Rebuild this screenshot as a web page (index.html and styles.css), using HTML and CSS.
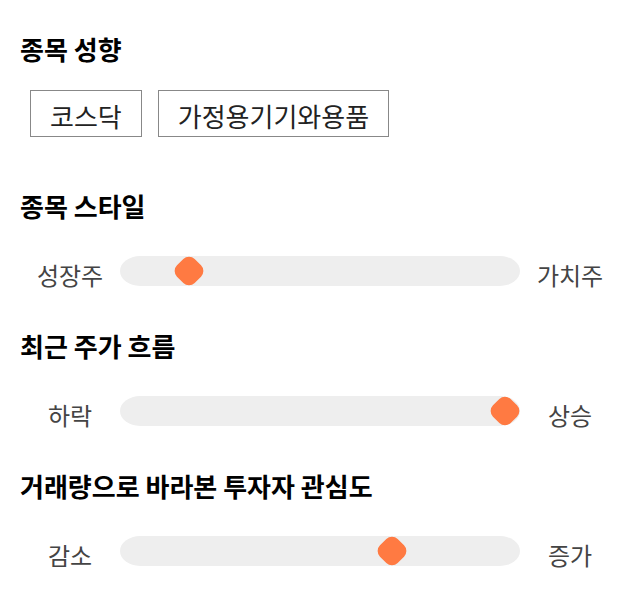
FILE: index.html
```html
<!DOCTYPE html>
<html>
  <head>
    <meta charset="utf-8" />
    <title>종목 분석</title>
    <link rel="stylesheet" href="styles.css">
  </head>
  <body>
    <section class="group">
      <h2 class="title">종목 성향</h2>
      <ul class="tags">
        <li class="tag">코스닥</li>
        <li class="tag">가정용기기와용품</li>
      </ul>
    </section>

    <section class="group">
      <h2 class="title">종목 스타일</h2>
      <div class="scale">
        <span class="scale-label">성장주</span>
        <div class="track"><span class="thumb" style="left: 17.25%"></span></div>
        <span class="scale-label">가치주</span>
      </div>
    </section>

    <section class="group">
      <h2 class="title">최근 주가 흐름</h2>
      <div class="scale">
        <span class="scale-label">하락</span>
        <div class="track"><span class="thumb" style="left: 96.25%"></span></div>
        <span class="scale-label">상승</span>
      </div>
    </section>

    <section class="group">
      <h2 class="title">거래량으로 바라본 투자자 관심도</h2>
      <div class="scale">
        <span class="scale-label">감소</span>
        <div class="track"><span class="thumb" style="left: 68%"></span></div>
        <span class="scale-label">증가</span>
      </div>
    </section>
  </body>
</html>
```

FILE: styles.css
```css
html { font-family: "Noto Sans CJK KR", "Noto Sans", sans-serif; }

body {
  margin: 0;
  padding: 31px 20px 0;
  color: #222;
}

.group {
  margin-bottom: 38px;
}

.title {
  margin: 0;
  font-size: 26px;
  font-weight: bold;
  line-height: 36px;
  color: #000;
}

.tags {
  list-style: none;
  display: flex;
  gap: 16px;
  margin: 23px 0 51px 10px;
  padding: 0;
}
.tag {
  border: 1px solid #888;
  padding: 4px 19px 0;
  font-size: 26px;
  line-height: 41px;
}

.scale {
  display: grid;
  grid-template-columns: 100px 1fr 100px;
  align-items: start;
  margin-top: 32px;
}
.scale-label {
  text-align: center;
  font-size: 24px;
  line-height: 30px;
  color: #444;
  padding-top: 4px;
}

.track {
  position: relative;
  height: 30px;
  background-color: #eee;
  border-radius: 20px / 15px;
}
.thumb {
  position: absolute;
  top: 50%;
  width: 25px;
  height: 25px;
  border-radius: 8px;
  background-color: #ff7a42;
  transform: translate(-50%, -50%) rotate(45deg);
}
```
